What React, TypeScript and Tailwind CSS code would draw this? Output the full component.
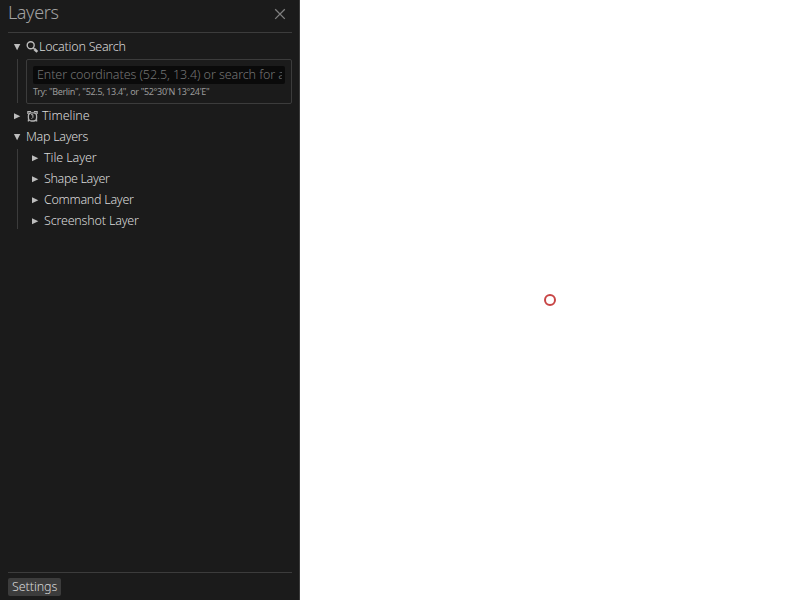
import type { ReactNode } from "react";

function Triangle({ open }: { open: boolean }) {
  return (
    <svg width="18" height="18" viewBox="0 0 18 18" className="shrink-0" fill="#bdbdbd">
      {open ? <path d="M5.9 6h6.4L9.1 12.2z" /> : <path d="M6 6.3v6L12.3 9.3z" />}
    </svg>
  );
}

function SearchIcon() {
  return (
    <svg width="13" height="18" viewBox="0 0 13 18" className="shrink-0" fill="none" stroke="#bcbcbc">
      <circle cx="4.7" cy="7.3" r="3.5" strokeWidth="1.4" />
      <path d="M7.2 9.8l1.3 1.3" strokeWidth="1.4" />
      <path d="M8.3 11l3 2.9" strokeWidth="2.5" />
    </svg>
  );
}

function ClockIcon() {
  return (
    <svg width="16" height="18" viewBox="0 0 16 18" className="shrink-0" fill="none" stroke="#b4b4b4">
      <rect x="2.4" y="5.8" width="8.2" height="8.2" rx="3" strokeWidth="1.3" />
      <path d="M1.9 7V4.6h3.2M11.1 7V4.6H7.9M2.4 12.6v2M10.6 12.6v2" strokeWidth="1.3" />
      <path d="M5 7.7h1.9v2.7L5.6 11.7" strokeWidth="1" />
    </svg>
  );
}

function Row({ open = false, icon, label, spacing }: { open?: boolean; icon?: ReactNode; label: string; spacing: string }) {
  return (
    <div className="flex h-[18px] items-center">
      <Triangle open={open} />
      {icon}
      <span className={"text-[12.5px] leading-[18px] " + spacing}>{label}</span>
    </div>
  );
}

export default function App() {
  return (
    <div className="flex h-[600px] w-[800px] overflow-hidden bg-white font-['Noto_Sans',sans-serif] font-light whitespace-nowrap text-[#dadada]">
      <aside className="flex w-[300px] shrink-0 flex-col border-r border-[#3c3c3c] bg-[#1b1b1b] pl-2 pr-[7px]">
        <header className="flex h-[33px] items-start justify-between border-b border-[#3c3c3c] text-[#a2a2a2]">
          <h1 className="text-[18px] leading-[25px] tracking-[-0.4px]">Layers</h1>
          <svg width="24" height="28" viewBox="0 0 24 28" fill="none" stroke="#808080" strokeWidth="1.3">
            <path d="M7.2 9.3l9.6 9.6M16.8 9.3L7.2 18.9" />
          </svg>
        </header>
        <div className="flex flex-col gap-[3px] pt-[5px]">
          <section>
            <Row open icon={<SearchIcon />} label="Location Search" spacing="tracking-[-0.23px]" />
            <div className="relative ml-[9px] mt-[3px] flex h-[45px] pl-2">
              <div className="absolute left-0 top-0 h-11 w-px bg-[#3c3c3c]" />
              <div className="ml-px h-[45px] w-[266px] rounded-[2px] border border-[#3c3c3c] p-[6px]">
                <div className="h-[18px] w-[252px] rounded-[2px] bg-[#0a0a0a] px-1">
                  <input
                    type="text"
                    placeholder="Enter coordinates (52.5, 13.4) or search for a place"
                    className="block h-[18px] w-[245px] bg-transparent p-0 text-[12.5px] leading-[18px] tracking-[-0.08px] outline-none placeholder:text-[#747474]"
                  />
                </div>
                <p className="mt-[2px] text-[9px] leading-[12px] font-normal tracking-[-0.34px] text-[#9a9a9a]">
                  Try: "Berlin", "52.5, 13.4", or "52°30'N 13°24'E"
                </p>
              </div>
            </div>
          </section>
          <Row icon={<ClockIcon />} label="Timeline" spacing="tracking-[-0.02px]" />
          <section>
            <Row open label="Map Layers" spacing="tracking-[-0.3px]" />
            <div className="relative ml-[9px] mt-[3px] flex flex-col gap-[3px] pl-[9px]">
              <div className="absolute left-0 top-0 h-20 w-px bg-[#3c3c3c]" />
              <Row label="Tile Layer" spacing="tracking-[-0.08px]" />
              <Row label="Shape Layer" spacing="tracking-[-0.35px]" />
              <Row label="Command Layer" spacing="tracking-[-0.27px]" />
              <Row label="Screenshot Layer" spacing="tracking-[-0.18px]" />
            </div>
          </section>
        </div>
        <footer className="mt-auto h-7 border-t border-[#3c3c3c] pt-[5px]">
          <button className="block h-[18px] w-[53px] rounded-[2px] bg-[#3c3c3c] pl-1 text-left text-[12.5px] leading-[18px] tracking-[-0.08px]">
            Settings
          </button>
        </footer>
      </aside>
      <main className="flex flex-1 items-center justify-center bg-white">
        <svg width="14" height="14" viewBox="0 0 14 14">
          <circle cx="7" cy="7" r="5" fill="none" stroke="#c84646" strokeWidth="2" />
        </svg>
      </main>
    </div>
  );
}
